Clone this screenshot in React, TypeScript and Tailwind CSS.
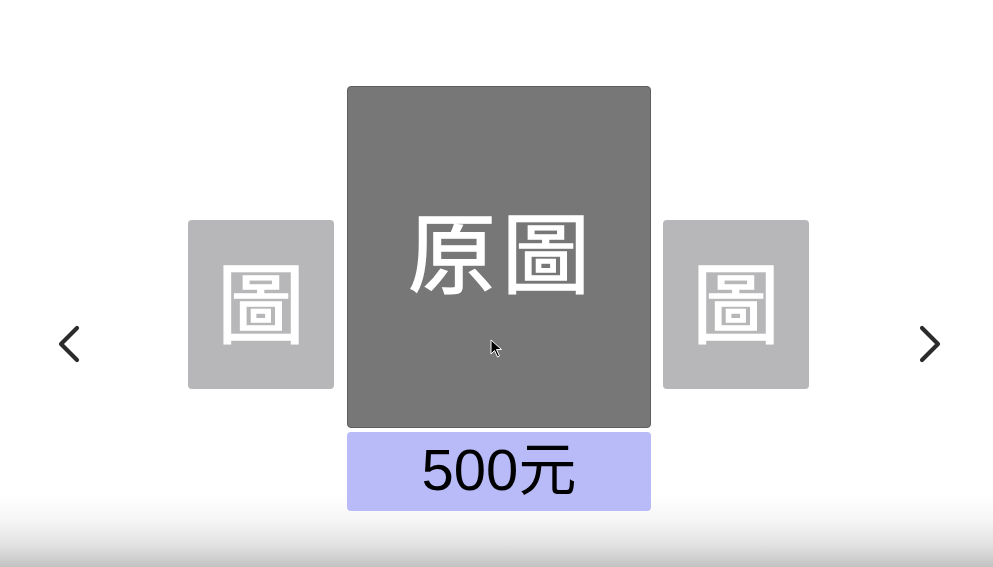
import React from 'react';

const cjk = "font-['Noto_Sans_CJK_TC','Noto_Sans_CJK_SC',sans-serif] [-webkit-text-stroke:1.4px_#ffffff]";

function Chevron({ dir }: { dir: 'left' | 'right' }) {
  const points = dir === 'left' ? '20,3 4,19 20,35' : '4,3 20,19 4,35';
  return (
    <svg width="24" height="38" viewBox="0 0 24 38" className="shrink-0">
      <polyline
        points={points}
        fill="none"
        stroke="#2b2b2b"
        strokeWidth="4.2"
        strokeLinecap="round"
        strokeLinejoin="round"
      />
    </svg>
  );
}

function SideCard() {
  return (
    <div className="w-[146px] h-[169px] mt-[134px] rounded-[4px] bg-[#b7b6b8] flex items-center justify-center shrink-0">
      <span className={`${cjk} text-white text-[88px] leading-none -mt-[14px]`}>圖</span>
    </div>
  );
}

export default function App() {
  return (
    <div className="relative w-full h-[567px] overflow-hidden bg-[linear-gradient(to_bottom,#ffffff_0px,#ffffff_495px,#f6f6f6_520px,#e2e2e2_545px,#c2c2c2_567px)]">
      <div className="flex items-start pt-[86px] pl-[57px]">
        <div className="mt-[239px]">
          <Chevron dir="left" />
        </div>
        <div className="ml-[107px]">
          <SideCard />
        </div>
        <div className="ml-[13px] w-[304px] flex flex-col shrink-0">
          <div className="h-[342px] rounded-[4px] bg-[#777777] border border-[#5e5e5e] flex items-center justify-center">
            <span className={`${cjk} text-white text-[88px] leading-none tracking-[6px] pl-[6px] -mt-[18px]`}>原圖</span>
          </div>
          <div className="mt-[4px] h-[79px] rounded-[4px] bg-[#b8bbf7] flex items-center justify-center">
            <span className={`font-['Liberation_Sans','Noto_Sans_CJK_TC',sans-serif] text-black text-[58px] leading-none -mt-[3px]`}>
              500元
            </span>
          </div>
        </div>
        <div className="ml-[12px]">
          <SideCard />
        </div>
        <div className="ml-[109px] mt-[239px]">
          <Chevron dir="right" />
        </div>
      </div>

      <svg
        className="absolute left-[490px] top-[339px]"
        width="13"
        height="20"
        viewBox="0 0 13 20"
      >
        <path d="M1 1 L1 15 L4.5 11.5 L7.5 18 L9.5 17 L6.5 10.5 L11.5 10.5 Z" fill="#000" stroke="#fff" strokeWidth="1" />
      </svg>
    </div>
  );
}
